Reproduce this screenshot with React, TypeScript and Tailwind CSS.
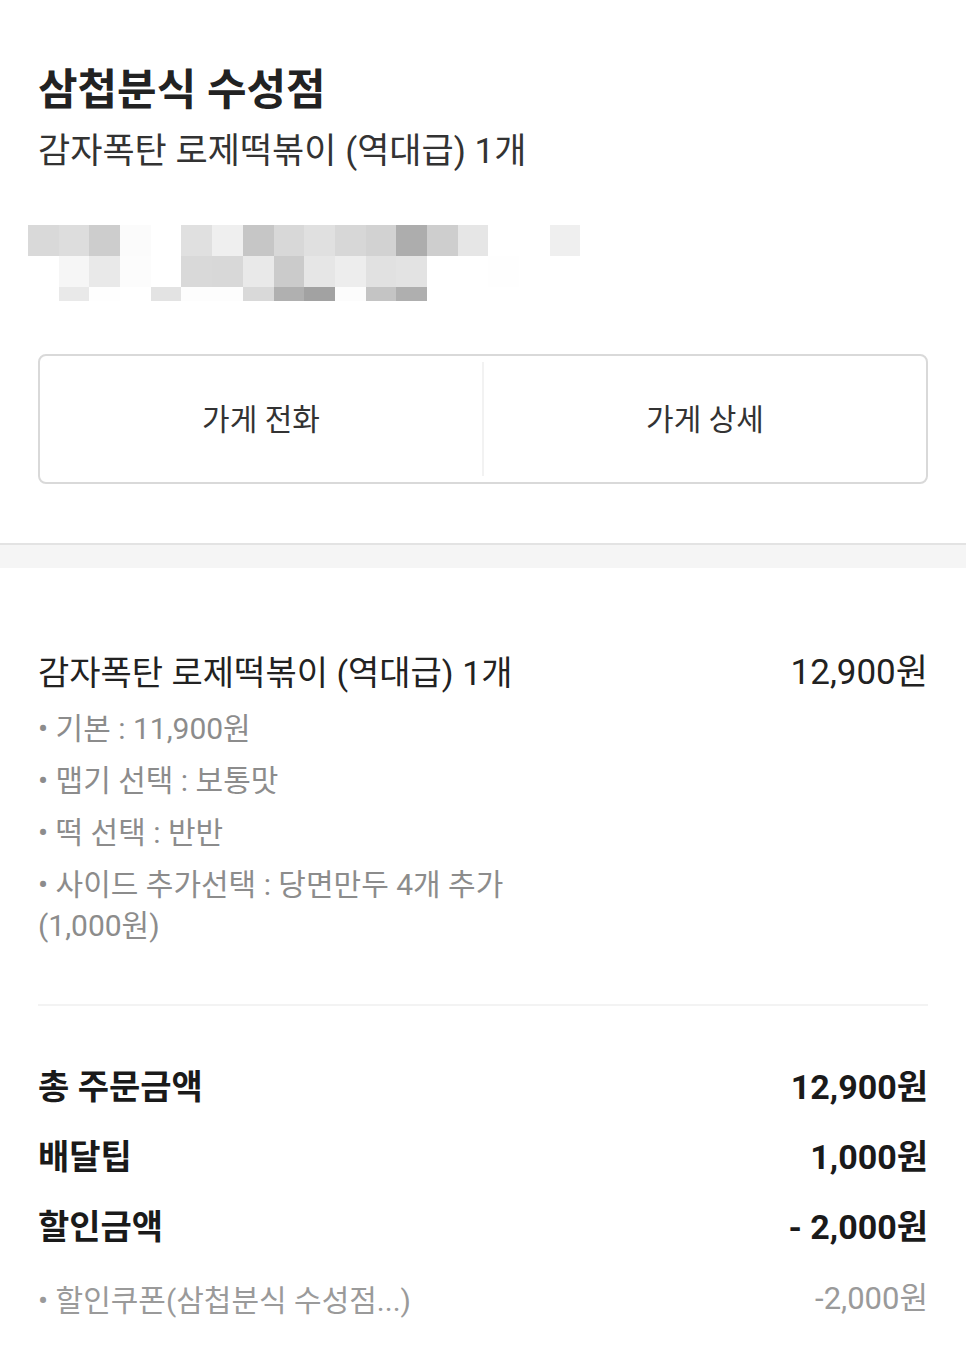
import React from 'react';

// pixelated (blurred) address block, row by row
const mosaic: string[][] = [
  ['#d9d9d9', '#dddddd', '#cdcdcd', '#fbfbfb', '#ffffff', '#e0e0e0', '#efefef', '#c6c6c6', '#d8d8d8', '#e0e0e0', '#d7d7d7', '#d2d2d2', '#adadad', '#cecece', '#e6e6e6', '#ffffff', '#ffffff', '#efefef'],
  ['#ffffff', '#f6f6f6', '#e9e9e9', '#fcfcfc', '#ffffff', '#d9d9d9', '#d8d8d8', '#e9e9e9', '#cbcbcb', '#e6e6e6', '#ededed', '#e1e1e1', '#e3e3e3', '#ffffff', '#ffffff', '#fefefe', '#ffffff', '#ffffff'],
  ['#ffffff', '#e9e9e9', '#fefefe', '#ffffff', '#e3e3e3', '#fdfdfd', '#fdfdfd', '#d9d9d9', '#b0b0b0', '#a2a2a2', '#fcfcfc', '#c4c4c4', '#afafaf', '#ffffff', '#ffffff', '#ffffff', '#ffffff', '#ffffff'],
];

const options = ['• 기본 : 11,900원', '• 맵기 선택 : 보통맛', '• 떡 선택 : 반반'];

const totals = [
  { label: '총 주문금액', value: '12,900원' },
  { label: '배달팁', value: '1,000원' },
  { label: '할인금액', value: '- 2,000원' },
];

export default function App() {
  return (
    <div className="min-h-screen w-full bg-white font-['Roboto','Noto_Sans_CJK_KR',sans-serif] text-[#222]">
      {/* Store header */}
      <div className="px-[38px] pt-[64px]">
        <h1 className="text-[43px] font-bold leading-[52px] text-[#222]">삼첩분식 수성점</h1>
        <p className="mt-[14px] text-[35px] leading-[44px] text-[#333]">감자폭탄 로제떡볶이 (역대급) 1개</p>

        <div className="-ml-[10px] mt-[51px] flex flex-col">
          {mosaic.map((row, r) => (
            <div key={r} className={`flex ${r === 2 ? 'h-[14px]' : 'h-[31px]'}`}>
              {row.map((c, i) => (
                <div key={i} className="w-[30.7px] shrink-0" style={{ backgroundColor: c }} />
              ))}
            </div>
          ))}
        </div>

        <div className="mt-[53px] flex h-[130px] rounded-[8px] border-2 border-[#d9d9d9]">
          <button className="flex flex-1 items-center justify-center text-[30px] text-[#333]">가게 전화</button>
          <div className="my-[6px] w-[2px] bg-[#f2f2f2]" />
          <button className="flex flex-1 items-center justify-center text-[30px] text-[#333]">가게 상세</button>
        </div>
      </div>

      <div className="mt-[59px] h-[25px] border-t-2 border-[#e3e3e3] bg-[#f5f5f5]" />

      {/* Order item */}
      <div className="px-[38px] pt-[83px]">
        <div className="flex items-start justify-between">
          <div className="flex flex-col">
            <p className="text-[34px] leading-[44px] text-[#222]">감자폭탄 로제떡볶이 (역대급) 1개</p>
            <div className="mt-[13px] flex flex-col gap-[11px] text-[30px] leading-[41px] text-[#8c8c8c]">
              {options.map((o) => (
                <p key={o}>{o}</p>
              ))}
              <p>
                • 사이드 추가선택 : 당면만두 4개 추가
                <br />
                (1,000원)
              </p>
            </div>
          </div>
          <p className="text-[35px] leading-[44px] text-[#222]">12,900원</p>
        </div>

        <div className="mt-[58px] h-[2px] bg-[#f3f3f3]" />

        {/* Totals */}
        <div className="flex flex-col gap-[24px] pt-[58px]">
          {totals.map((t) => (
            <div key={t.label} className="flex items-center justify-between text-[34px] font-bold leading-[46px] text-[#1a1a1a]">
              <span>{t.label}</span>
              <span>{t.value}</span>
            </div>
          ))}
        </div>

        <div className="mt-[31px] flex items-center justify-between pb-[40px] text-[30px] leading-[40px] text-[#9a9a9a]">
          <span>• 할인쿠폰(삼첩분식 수성점...)</span>
          <span className="-mt-[4px] text-[31px]">-2,000원</span>
        </div>
      </div>
    </div>
  );
}
